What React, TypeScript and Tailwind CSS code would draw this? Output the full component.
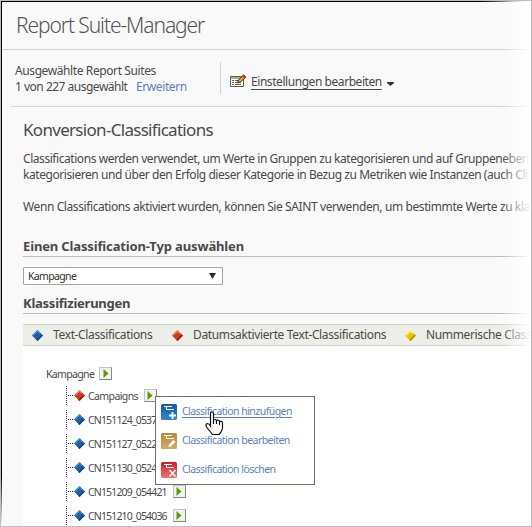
import React from 'react';

const diamondFill = {
  blue: ['#4d8fd0', '#1d5fa8', '#0f4580'],
  red: ['#ee8068', '#cc3a22', '#96200e'],
  yellow: ['#fff27a', '#e8c60a', '#b39200'],
};

function Diamond({ color }: { color: 'blue' | 'red' | 'yellow' }) {
  const [light, mid, dark] = diamondFill[color];
  return (
    <svg className="size-[11px] shrink-0" viewBox="0 0 10 10">
      <path d="M5 0L10 5L5 10L0 5Z" fill={mid} />
      <path d="M5 0L0 5L1.8 5L5 1.8L6.8 3.6L7.2 2.2Z" fill={light} />
      <path d="M10 5L5 10L3.8 8.8L8.6 4.4Z" fill={dark} />
    </svg>
  );
}

function Play() {
  return (
    <span className="flex size-[13px] shrink-0 items-center justify-center border border-[#c4c4bc] border-r-[#858585] border-b-[#858585] bg-[#f3f3ee]">
      <svg className="h-[9px] w-[6px]" viewBox="0 0 6 9">
        <path d="M0.5 0L5.5 4.5L0.5 9Z" fill="#5c9a00" />
      </svg>
    </span>
  );
}

function Row({ label, color = 'blue', play = true }: { label: string; color?: 'blue' | 'red'; play?: boolean }) {
  return (
    <div className="flex h-6 items-start">
      <svg className="h-[19px] w-[7px] shrink-0" viewBox="0 0 7 19">
        <path d="M.5 0V19M2 9.5H7" stroke="#333" strokeDasharray="1 1" fill="none" />
      </svg>
      <div className="ml-px flex h-[19px] items-center">
        <Diamond color={color} />
        <span className={color === 'red' ? 'mt-px ml-[3px] text-[10.5px] leading-4 whitespace-nowrap tracking-[-0.6px]' : 'mt-px ml-[3px] text-[10.5px] leading-4 whitespace-nowrap tracking-[-0.84px]'}>{label}</span>
        {play && <span className="ml-[6px]"><Play /></span>}
      </div>
    </div>
  );
}

function MenuIcon({ kind }: { kind: 'add' | 'edit' | 'delete' }) {
  const colors = { add: ['#1258a8', '#3388cc'], edit: ['#b98839', '#d2ab67'], delete: ['#cc1f1f', '#ed7770'] }[kind];
  return (
    <svg className="size-4 shrink-0" viewBox="0 0 16 16">
      <defs>
        <linearGradient id={kind} x2="0" y2="1">
          <stop stopColor={colors[0]} />
          <stop offset="1" stopColor={colors[1]} />
        </linearGradient>
      </defs>
      <rect width="16" height="16" rx="1.5" fill={`url(#${kind})`} />
      <path d="M3 2.5H11M5.5 2.5V5.5H13" stroke="#fff" fill="none" />
      {kind === 'add' && <path d="M11.5 8V15M8 11.5H15" stroke="#fff" strokeWidth="1.8" />}
      {kind === 'edit' && <path d="M7.5 14L8 11.5L12.5 7L14.5 9L10 13.5Z" fill="#fff" />}
      {kind === 'delete' && <path d="M8.5 8L14.5 14.5M14.5 8L8.5 14.5" stroke="#fff" strokeWidth="1.5" />}
    </svg>
  );
}

function MenuItem({ kind, label, active = false }: { kind: 'add' | 'edit' | 'delete'; label: string; active?: boolean }) {
  return (
    <div className="flex h-[29px] items-center gap-[5px]">
      <MenuIcon kind={kind} />
      <span className={active ? 'whitespace-nowrap underline underline-offset-2' : 'whitespace-nowrap'}>{label}</span>
    </div>
  );
}

export default function App() {
  return (
    <div
      className="relative h-[527px] w-[532px] overflow-hidden border border-[#bebebe] bg-[#f9f9f9] font-['Noto_Sans','Open_Sans',sans-serif] text-[12px] text-[#4a4a4a]"
    >
      <div className="h-[525px] w-[530px] overflow-hidden border-t border-l border-black whitespace-nowrap">
        <header className="h-[48px] border-b border-[#d4d4d4] pt-[8px] pl-[14px]">
          <h1 className="text-[21px] leading-[30px] font-light tracking-[-1.1px] text-[#555]">Report Suite-Manager</h1>
        </header>
        <section className="ml-[9px] flex h-[57px] items-start border-b border-[#d4d4d4]">
          <div className="w-[209px] pt-[13px] pl-[4px] leading-4 tracking-[-0.4px]">
            <div>Ausgewählte Report Suites</div>
            <div className="flex"><span className="w-[121px] tracking-[-0.5px]">1 von 227 ausgewählt</span><a className="text-[#5b7fc4]">Erweitern</a></div>
          </div>
          <div className="mt-3 flex h-8 items-center border-l border-[#d0d0d0] pt-[7px] pl-[9px]">
            <svg className="mb-[2px] h-[14px] w-4" viewBox="0 0 16 14">
              <path d="M.5 2.5H13.5V12.5H.5Z" fill="#fff" stroke="#5d6052" />
              <path d="M1 3H13V5H1Z" fill="#a5ae91" />
              <path d="M2 6.5H4M5 6.5H9M2 8.5H4M5 8.5H11M2 10.5H4M5 10.5H11" stroke="#5d6052" />
              <path d="M7.5 9L8.5 6L13.5 1L15.8 3L10.5 8Z" fill="#e9a646" stroke="#4a2018" />
              <path d="M12.3 2.2L13.8 .7L16 2.7L14.5 4.2Z" fill="#c63220" />
            </svg>
            <a className="ml-[5px] tracking-[-0.44px] underline underline-offset-3">Einstellungen bearbeiten</a>
            <svg className="mt-1 ml-[5px] h-1 w-[7px]" viewBox="0 0 7 4"><path d="M0 0H7V1L3.5 4L0 1Z" fill="#333" /></svg>
          </div>
        </section>
        <main>
          <h2 className="mt-[10px] ml-[21px] text-[17px] leading-[26px] tracking-[-0.7px]">Konversion-Classifications</h2>
          <div className="mt-[8px] ml-[21px] leading-4 tracking-[-0.44px]">
            <p>Classifications werden verwendet, um Werte in Gruppen zu kategorisieren und auf Gruppeneben</p>
            <p>kategorisieren und über den Erfolg dieser Kategorie in Bezug zu Metriken wie Instanzen (auch Cli</p>
            <p className="mt-4 tracking-[-0.4px]">Wenn Classifications aktiviert wurden, können Sie SAINT verwenden, um bestimmte Werte zu kla</p>
          </div>
          <h3 className="mt-[21px] ml-[21px] h-[21px] border-b border-[#bcbcbc] text-[13px] leading-5 font-bold tracking-[-0.14px]">Einen Classification-Typ auswählen</h3>
          <div className="mt-[10px] ml-[21px] flex h-[18px] w-[200px] items-center justify-between rounded-[1px] border border-[#a5a5a5] bg-white pr-[6px] pl-1 text-[10.5px] tracking-[-0.65px] text-[#303030]">
            <span className="mt-[2px]">Kampagne</span>
            <svg className="h-[6px] w-[7px]" viewBox="0 0 7 6"><path d="M0 0H7L3.5 6Z" fill="#262b28" /></svg>
          </div>
          <h3 className="mt-[8px] ml-[21px] h-[21px] border-b border-[#bcbcbc] text-[13px] leading-5 font-bold tracking-[-0.24px]">Klassifizierungen</h3>
          <div className="mt-[10px] ml-[21px] flex h-[22px] items-center border-y border-[#d0d1ca] bg-[#edeee7] pl-[9px] tracking-[-0.36px]">
            <Diamond color="blue" /><span className="ml-[10px] w-[119px] shrink-0">Text-Classifications</span>
            <Diamond color="red" /><span className="ml-[10px] w-[212px] shrink-0">Datumsaktivierte Text-Classifications</span>
            <Diamond color="yellow" /><span className="ml-[10px] shrink-0">Nummerische Class</span>
          </div>
          <div className="ml-[21px] h-[200px] bg-white pt-[18px]">
            <div className="flex h-[19px] items-center pl-[23px] text-[10.5px] tracking-[-0.65px]"><span className="mt-[2px]">Kampagne</span><span className="ml-[5px]"><Play /></span></div>
            <div className="mt-[3px] pl-[43px]">
              <Row label="Campaigns" color="red" />
              <Row label="CN151124_0537" play={false} />
              <Row label="CN151127_0522" play={false} />
              <Row label="CN151130_0524" play={false} />
              <Row label="CN151209_054421" />
              <Row label="CN151210_054036" />
            </div>
          </div>
        </main>
      </div>
      <div className="absolute top-[395px] left-[154px] h-[89px] w-[160px] border border-[#6d6f65] bg-white pl-[5px] text-[10.5px] tracking-[-0.54px] text-[#5b7fc4]">
        <MenuItem kind="add" label="Classification hinzufügen" active />
        <MenuItem kind="edit" label="Classification bearbeiten" />
        <MenuItem kind="delete" label="Classification löschen" />
      </div>
      <svg className="absolute top-[410px] left-[204px] h-[25px] w-[19px]" viewBox="0 0 19 25">
        <path d="M5.5 15V2.5Q5.5 1 7 1T8.5 2.5V9Q11 7.8 11.5 9.5Q14 8.5 14.5 10.5Q17.5 9.8 17.5 12V17Q17 21 14 23.5H7.5L1.5 16Q0 13 2.5 12.5Q4 12.5 5.5 15ZM8.5 9V13M11.5 9.5V13M14.5 10.5V14" fill="#fff" stroke="#111" strokeWidth="1.2" />
      </svg>
      <div className="pointer-events-none absolute inset-y-0 right-0 w-[30px] bg-linear-to-r from-transparent to-white" />
      <div className="pointer-events-none absolute top-0 right-0 h-px w-[50px] bg-linear-to-r from-transparent to-white" />
      <div className="pointer-events-none absolute bottom-0 left-0 h-[50px] w-px bg-linear-to-b from-transparent to-white" />
    </div>
  );
}
